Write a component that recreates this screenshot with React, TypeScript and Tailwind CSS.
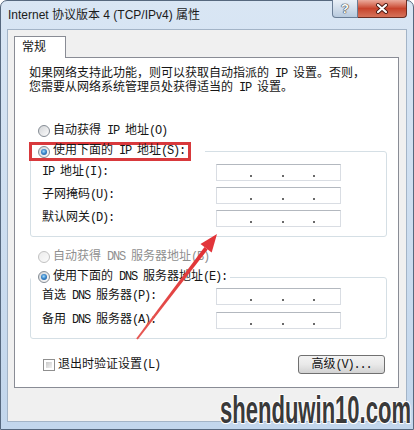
import React from 'react';

function T({ s }: { s: string }) {
  const parts = s.split(/([ -~]+)/);
  return (
    <>
      {parts.map((p, i) =>
        /^[ -~]+$/.test(p) ? (
          <span key={i} className="tracking-[-1.2px] whitespace-pre">
            {p}
          </span>
        ) : (
          <span key={i}>{p}</span>
        )
      )}
    </>
  );
}

function Radio({ checked = false, disabled = false }: { checked?: boolean; disabled?: boolean }) {
  return (
    <span
      className={
        disabled
          ? 'flex shrink-0 items-center justify-center w-[12px] h-[12px] rounded-full border border-[#c2c2c2] bg-linear-to-br from-[#ececec] to-[#fbfbfb]'
          : 'flex shrink-0 items-center justify-center w-[12px] h-[12px] rounded-full border border-[#858c94] bg-linear-to-br from-[#d2d4d7] to-[#fdfdfd]'
      }
    >
      {checked && (
        <span className="w-[6px] h-[6px] rounded-full bg-[radial-gradient(circle_at_45%_40%,#a6dcf8_0%,#3b87cb_45%,#154f90_100%)]" />
      )}
    </span>
  );
}

function IpBox() {
  return (
    <div className="w-[125px] h-[17px] border border-[#d9dde3] border-t-[#b3b8bf] bg-white flex items-end pb-[3px]">
      <span className="w-[33px] shrink-0" />
      <span className="w-[2px] h-[2px] shrink-0 bg-[#6a6a6a]" />
      <span className="w-[30px] shrink-0" />
      <span className="w-[2px] h-[2px] shrink-0 bg-[#6a6a6a]" />
      <span className="w-[29px] shrink-0" />
      <span className="w-[2px] h-[2px] shrink-0 bg-[#6a6a6a]" />
    </div>
  );
}

function Row({ label }: { label: string }) {
  return (
    <>
      <div className="leading-[17px] whitespace-pre">
        <T s={label} />
      </div>
      <IpBox />
    </>
  );
}

export default function App() {
  return (
    <div className="relative w-[414px] h-[430px] overflow-hidden bg-white">
      <div className="flex flex-col w-[414px] h-[430px] border border-[#56687e] rounded-t-[7px] bg-linear-to-b from-[#d9e6f4] to-[#c2d6ec] px-[6px] pb-[7px]">
        {/* Title bar */}
        <div className="flex h-[28px] items-center">
          <div className="flex-1 pl-[1px] text-[12px] text-[#1b1b1b] font-['Liberation_Sans','Noto_Sans_CJK_SC',sans-serif] whitespace-pre">
            Internet 协议版本 4 (TCP/IPv4) 属性
          </div>
          <div className="self-start -mt-px flex">
            <div className="w-[26px] h-[18px] rounded-bl-[4px] border border-t-0 border-[#6a7d95] bg-linear-to-b from-[#eaf0f7] to-[#b8cade] flex items-center justify-center text-[13px] leading-none font-bold text-white font-['Liberation_Sans',sans-serif] [text-shadow:0_0_1px_#333,0_0_1px_#333,0_0_1px_#333]">
              ?
            </div>
            <div className="w-[49px] h-[18px] rounded-br-[4px] border border-t-0 border-l-0 border-[#6b2c22] bg-linear-to-b from-[#eaaa9c] via-[#c7432c] to-[#d5725a] flex items-center justify-center">
              <svg width="14" height="11" viewBox="0 0 14 11">
                <path d="M3 2 L11 9 M11 2 L3 9" stroke="#4a1a14" strokeWidth="4" strokeLinecap="round" />
                <path d="M3 2 L11 9 M11 2 L3 9" stroke="#ffffff" strokeWidth="2.2" strokeLinecap="round" />
              </svg>
            </div>
          </div>
        </div>

        {/* Client area */}
        <div className="flex-1 border border-[#a3b4c7] bg-[#f0f0f0] flex flex-col">
          <div className="pt-[6px] pl-[6px] flex">
            <div className="relative z-10 -mb-px w-[52px] h-[22px] border border-b-0 border-[#898c95] bg-white pl-[7px] text-[12px] leading-[18px] text-[#151515] font-['Noto_Sans_CJK_SC',sans-serif]">
              常规
            </div>
          </div>
          <div className="ml-[6px] w-[385px] h-[331px] border border-[#898c95] bg-white flex flex-col text-[12px] text-[#151515] font-['Liberation_Mono','Noto_Sans_CJK_SC',monospace]">
            <div className="pt-[9px] pl-[14px] leading-[14px] whitespace-pre">
              <div>
                <T s="如果网络支持此功能，则可以获取自动指派的 IP 设置。否则，" />
              </div>
              <div>
                <T s="您需要从网络系统管理员处获得适当的 IP 设置。" />
              </div>
            </div>

            <div className="mt-[28px] pl-[23px] h-[16px] flex items-center gap-[3px] leading-[16px]">
              <Radio />
              <span className="whitespace-pre">
                <T s="自动获得 IP 地址(O)" />
              </span>
            </div>

            <fieldset className="mt-[3px] ml-[15px] w-[357px] border border-[#d5dfe5] rounded-[3px] pb-[9px]">
              <legend className="pr-[14px]">
                <span className="-ml-[2px] flex items-center h-[19px] border-[3px] border-[#d8393c] pl-[6px] pr-[3px] gap-[3px] leading-[13px] whitespace-pre">
                  <Radio checked />
                  <span>
                    <T s="使用下面的 IP 地址(S):" />
                  </span>
                </span>
              </legend>
              <div className="pt-[3px] pl-[11px] grid grid-cols-[174px_125px] gap-y-[6px] items-center">
                <Row label="IP 地址(I):" />
                <Row label="子网掩码(U):" />
                <Row label="默认网关(D):" />
              </div>
            </fieldset>

            <div className="mt-[12px] pl-[23px] h-[16px] flex items-center gap-[3px] leading-[16px] text-[#8f8f8f]">
              <Radio disabled />
              <span className="whitespace-pre">
                <T s="自动获得 DNS 服务器地址(B)" />
              </span>
            </div>

            <fieldset className="mt-[4px] ml-[15px] w-[357px] border border-[#d5dfe5] rounded-[3px] pb-[9px]">
              <legend className="pl-[7px] pr-[3px]">
                <span className="flex items-center h-[16px] gap-[3px] leading-[16px] whitespace-pre">
                  <Radio checked />
                  <span>
                    <T s="使用下面的 DNS 服务器地址(E):" />
                  </span>
                </span>
              </legend>
              <div className="pt-[3px] pl-[11px] grid grid-cols-[174px_125px] gap-y-[7px] items-center">
                <Row label="首选 DNS 服务器(P):" />
                <Row label="备用 DNS 服务器(A):" />
              </div>
            </fieldset>

            <div className="mt-[16px] pl-[28px] pr-[13px] flex items-center justify-between">
              <div className="flex items-center gap-[3px] leading-[16px]">
                <span className="w-[12px] h-[12px] border border-[#8f8f8f] bg-white p-[2px] flex">
                  <span className="flex-1 bg-linear-to-br from-[#c9c9c9] to-[#f2f2f2]" />
                </span>
                <span className="whitespace-pre">
                  <T s="退出时验证设置(L)" />
                </span>
              </div>
              <div className="w-[87px] h-[19px] rounded-[3px] border border-[#707070] bg-linear-to-b from-[#f3f3f3] via-[#e9e9e9] to-[#d2d2d2] flex items-center justify-center leading-[16px] whitespace-pre">
                <T s="高级(V)..." />
              </div>
            </div>
          </div>
        </div>
      </div>

      {/* Red annotation arrow */}
      <svg className="absolute left-0 top-0 pointer-events-none" width="414" height="430" viewBox="0 0 414 430">
        <defs>
          <linearGradient id="ar" x1="0" y1="1" x2="1" y2="0">
            <stop offset="0" stopColor="#e65a55" />
            <stop offset="1" stopColor="#e02f33" />
          </linearGradient>
        </defs>
        <polygon points="136.2,338.4 137.8,339.6 207.7,249.5 204.5,247.1" fill="url(#ar)" />
        <polygon points="217,234 211.7,252.5 200.5,244.1" fill="#e2353a" />
      </svg>

      {/* Watermark */}
      <div className="absolute left-[220px] top-[391px] origin-left scale-x-[0.58] text-[38px] leading-none font-bold text-[#3a3a3a] font-['Liberation_Sans',sans-serif] whitespace-pre pointer-events-none [text-shadow:1px_1px_0_#fff,-1px_-1px_0_#fff,1px_-1px_0_#fff,-1px_1px_0_#fff,0_0_3px_#fff]">
        shenduwin10.com
      </div>
    </div>
  );
}
